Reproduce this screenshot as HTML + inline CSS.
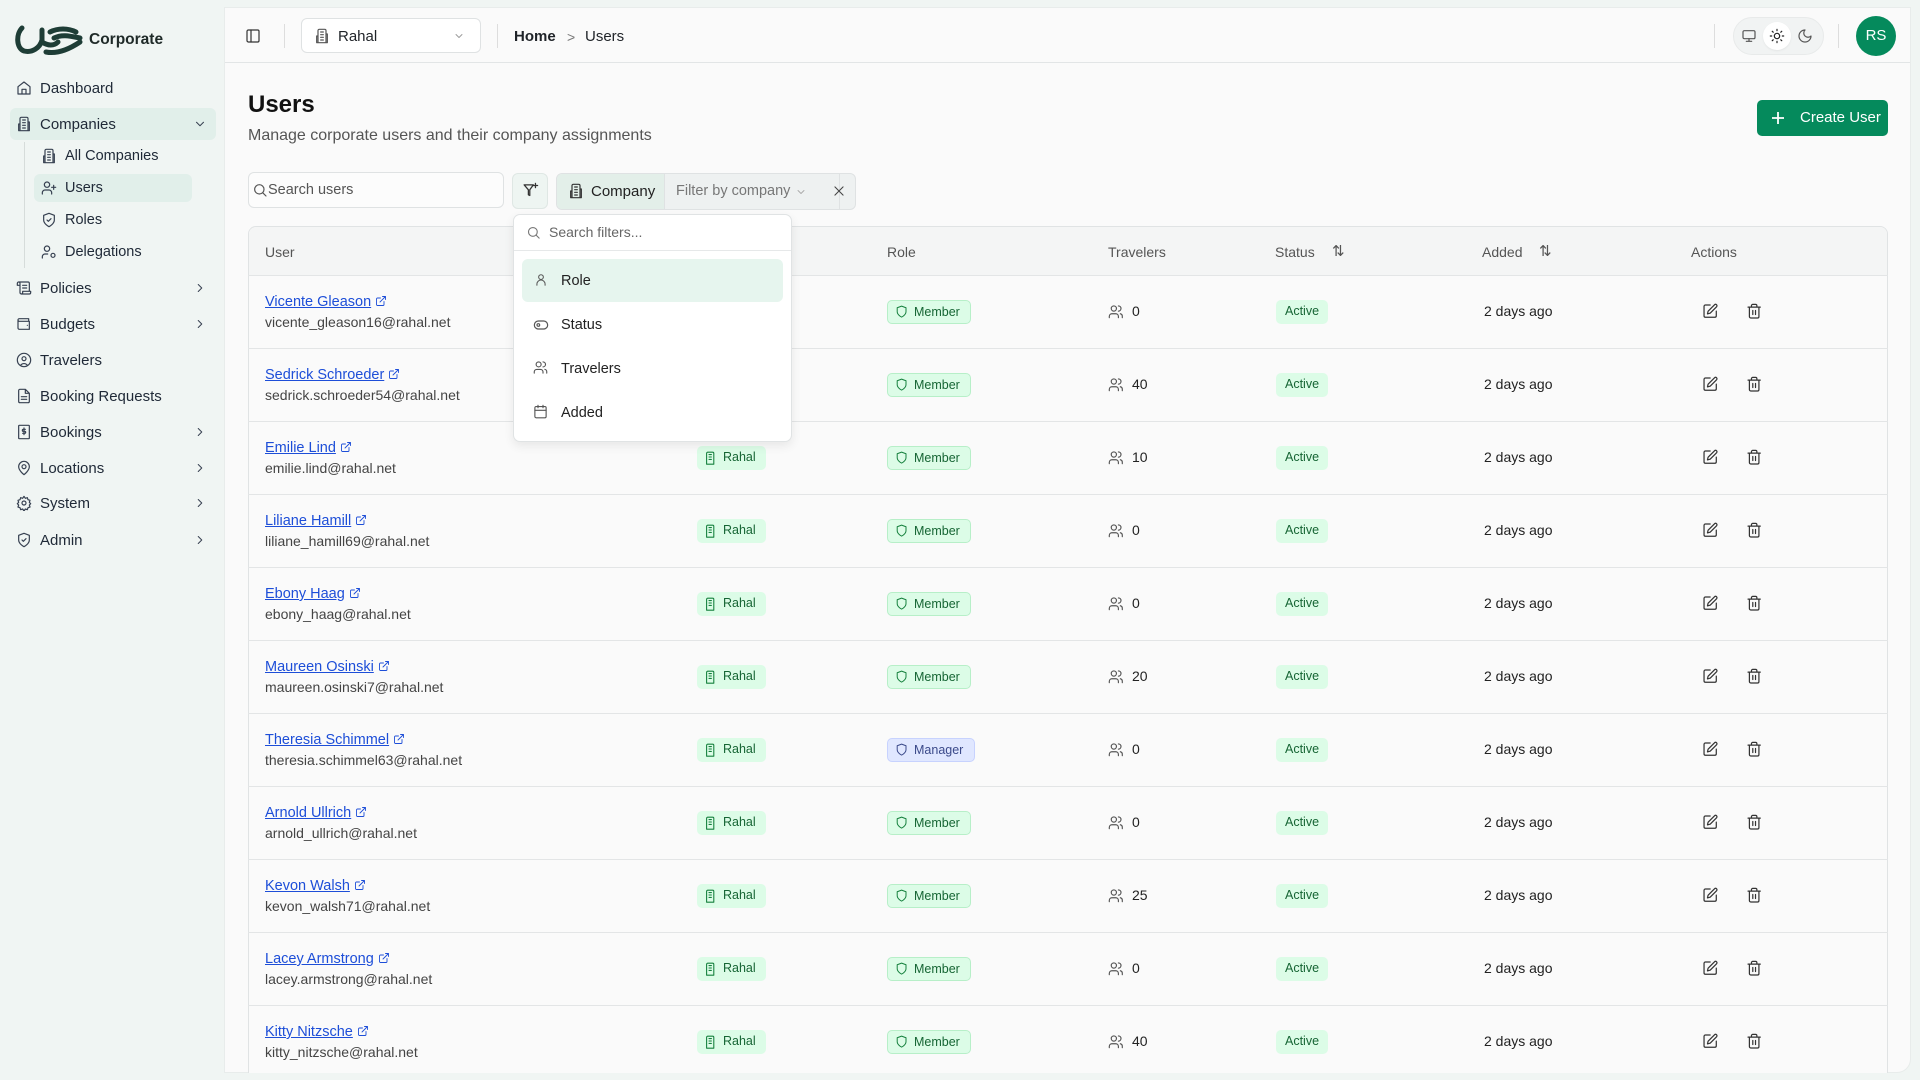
<!DOCTYPE html>
<html><head><meta charset="utf-8"><style>
*{box-sizing:border-box;margin:0;padding:0}
body{width:1920px;height:1080px;overflow:hidden;background:#f0f5f3;font-family:"Liberation Sans",Arial,sans-serif;color:#1f2328;position:relative}
.a{position:absolute}
svg{display:block}
.ic{fill:none;stroke:currentColor;stroke-width:1.8;stroke-linecap:round;stroke-linejoin:round}
.nav{position:absolute;left:40px;font-size:15px;color:#1f2937}
.navi{position:absolute;left:16px;width:16px;height:16px;color:#374151}
.chev{position:absolute;left:193px;color:#374151}
.main{position:absolute;left:224px;top:7px;width:1687px;height:1066px;background:#fafafa;border-radius:0 0 14px 0;border:1px solid #e8eceb}
.row{position:absolute;left:248px;width:1640px;height:73px;border-top:1px solid #e3e5e6}
.nm{position:absolute;left:17px;top:18px;font-size:14.5px;color:#1d4ed8}
.nm span{text-decoration:underline}
.nm svg{display:inline-block;vertical-align:-1px;margin-left:4px}
.em{position:absolute;left:17px;top:38px;font-size:14px;color:#444}
.bd{position:absolute;top:24px;height:24px;border-radius:5px;font-size:12.5px;line-height:22px;padding-left:26px;color:#166534;background:#dcfce7}
.rh{left:449px;width:69px}
.mb{left:639px;width:84px;border:1px solid #b7efc8}
.mg{left:639px;width:88px;border:1px solid #c7d2fe;background:#e0e7ff;color:#3b4a8a}
.ac{left:1028px;width:52px;padding-left:9px}
.tv{position:absolute;left:860px;top:27px;font-size:14px;color:#222}
.dt{position:absolute;left:1236px;top:27px;font-size:14px;color:#222}
</style></head><body>
<svg width="0" height="0" style="position:absolute"><defs>
<g id="bld" class="ic"><path d="M6 22V4a2 2 0 012-2h8a2 2 0 012 2v18z M10 6h4M10 10h4M10 14h4"/></g>
<g id="shd" class="ic"><path d="M12 22s8-4 8-10V5l-8-3-8 3v7c0 6 8 10 8 10z"/></g>
<g id="usr" class="ic"><circle cx="9" cy="7" r="4"/><path d="M2 21v-2a4 4 0 014-4h6a4 4 0 014 4v2 M16 3a4 4 0 010 8 M22 21v-2a4 4 0 00-3-4"/></g>
<g id="edt" class="ic"><path d="M12 3H5a2 2 0 00-2 2v14a2 2 0 002 2h14a2 2 0 002-2v-7 M18.4 2.6a2 2 0 013 3L12 15l-4 1 1-4z"/></g>
<g id="trs" class="ic"><path d="M3 6h18 M19 6v14a2 2 0 01-2 2H7a2 2 0 01-2-2V6 M8 6V4a2 2 0 012-2h4a2 2 0 012 2v2 M10 11v6M14 11v6"/></g>
<g id="ext" class="ic"><path d="M15 3h6v6 M10 14L21 3 M18 13v6a2 2 0 01-2 2H5a2 2 0 01-2-2V8a2 2 0 012-2h6"/></g>
</defs></svg>
<!-- logo -->
<svg class="a" style="left:14px;top:24px" width="70" height="32" viewBox="0 0 70 32"><path d="M8 4 C2 10 2 24 10 27 C18 29 26 24 28 16 L28 6 M28 18 C34 22 40 22 44 18 M36 8 C44 4 54 4 62 8 M40 14 C48 10 56 12 66 14 M32 28 C42 30 54 26 66 18" fill="none" stroke="#1e3d36" stroke-width="5" stroke-linecap="round"/></svg>
<div class="a" style="left:89px;top:31px;font-size:15.5px;font-weight:bold;color:#1f2a28">Corporate</div>

<!-- sidebar -->
<div class="a" style="left:10px;top:108px;width:206px;height:32px;background:#e1efea;border-radius:6px"></div>
<div class="a" style="left:34px;top:174px;width:158px;height:28px;background:#e1efea;border-radius:6px"></div>
<div class="a" style="left:24px;top:142px;width:1px;height:126px;background:#d6dcda"></div>

<svg class="navi ic" style="top:80px" viewBox="0 0 24 24"><path d="M3 10l9-7 9 7v11H3z M9 21v-7h6v7"/></svg><div class="nav" style="top:80px">Dashboard</div>
<svg class="navi ic" style="top:116px" viewBox="0 0 24 24"><path d="M6 22V4a2 2 0 012-2h8a2 2 0 012 2v18z M6 12H4v10h2 M18 9h2v13h-2 M10 6h4M10 10h4M10 14h4M10 18h4"/></svg><div class="nav" style="top:116px">Companies</div>
<svg class="chev ic" style="top:117px" width="14" height="14" viewBox="0 0 24 24"><path d="M6 9l6 6 6-6"/></svg>
<svg class="navi ic" style="left:41px;top:148px" viewBox="0 0 24 24"><path d="M6 22V4a2 2 0 012-2h8a2 2 0 012 2v18z M6 12H4v10h2 M18 9h2v13h-2 M10 6h4M10 10h4M10 14h4M10 18h4"/></svg><div class="nav" style="left:65px;top:148px;font-size:14.5px">All Companies</div>
<svg class="navi ic" style="left:41px;top:180px" viewBox="0 0 24 24"><circle cx="9" cy="7" r="4"/><path d="M2 21v-2a4 4 0 014-4h6a4 4 0 014 4v2 M19 8v6 M16 11h6"/></svg><div class="nav" style="left:65px;top:180px;font-size:14.5px">Users</div>
<svg class="navi ic" style="left:41px;top:212px" viewBox="0 0 24 24"><path d="M12 22s8-4 8-10V5l-8-3-8 3v7c0 6 8 10 8 10z M9 12l2 2 4-4"/></svg><div class="nav" style="left:65px;top:212px;font-size:14.5px">Roles</div>
<svg class="navi ic" style="left:41px;top:244px" viewBox="0 0 24 24"><circle cx="9" cy="7" r="4"/><path d="M2 21v-2a4 4 0 014-4h4"/><circle cx="18" cy="17" r="3"/></svg><div class="nav" style="left:65px;top:244px;font-size:14.5px">Delegations</div>

<svg class="navi ic" style="top:280px" viewBox="0 0 24 24"><path d="M8 21h12a2 2 0 002-2v-2H10v2a2 2 0 11-4 0V5a2 2 0 00-2-2h14a2 2 0 012 2v12 M4 3a2 2 0 00-2 2v3h4 M10 8h6M10 12h6"/></svg><div class="nav" style="top:280px">Policies</div>
<svg class="chev ic" style="top:281px" width="14" height="14" viewBox="0 0 24 24"><path d="M9 6l6 6-6 6"/></svg>
<svg class="navi ic" style="top:316px" viewBox="0 0 24 24"><path d="M19 7V4H5a2 2 0 000 4h15v12H5a2 2 0 01-2-2V6 M17 14h.01"/></svg><div class="nav" style="top:316px">Budgets</div>
<svg class="chev ic" style="top:317px" width="14" height="14" viewBox="0 0 24 24"><path d="M9 6l6 6-6 6"/></svg>
<svg class="navi ic" style="top:352px" viewBox="0 0 24 24"><circle cx="12" cy="12" r="10"/><circle cx="12" cy="10" r="3"/><path d="M7 20a6 6 0 0110 0"/></svg><div class="nav" style="top:352px">Travelers</div>
<svg class="navi ic" style="top:388px" viewBox="0 0 24 24"><path d="M14 2H6a2 2 0 00-2 2v16a2 2 0 002 2h12a2 2 0 002-2V8z M14 2v6h6 M8 13h8M8 17h8"/></svg><div class="nav" style="top:388px">Booking Requests</div>
<svg class="navi ic" style="top:424px" viewBox="0 0 24 24"><rect x="4" y="2" width="16" height="20" rx="1"/><path d="M14 8h-3a1.5 1.5 0 000 3h2a1.5 1.5 0 010 3h-3 M12 6v10"/></svg><div class="nav" style="top:424px">Bookings</div>
<svg class="chev ic" style="top:425px" width="14" height="14" viewBox="0 0 24 24"><path d="M9 6l6 6-6 6"/></svg>
<svg class="navi ic" style="top:460px" viewBox="0 0 24 24"><path d="M20 10c0 6-8 12-8 12s-8-6-8-12a8 8 0 0116 0z"/><circle cx="12" cy="10" r="3"/></svg><div class="nav" style="top:460px">Locations</div>
<svg class="chev ic" style="top:461px" width="14" height="14" viewBox="0 0 24 24"><path d="M9 6l6 6-6 6"/></svg>
<svg class="navi ic" style="top:495px" viewBox="0 0 24 24"><circle cx="12" cy="12" r="3"/><path d="M12 2l2 3 3-1 1 3 3 1-1 3 2 2-2 2 1 3-3 1-1 3-3-1-2 3-2-3-3 1-1-3-3-1 1-3-2-2 2-2-1-3 3-1 1-3 3 1z"/></svg><div class="nav" style="top:495px">System</div>
<svg class="chev ic" style="top:496px" width="14" height="14" viewBox="0 0 24 24"><path d="M9 6l6 6-6 6"/></svg>
<svg class="navi ic" style="top:532px" viewBox="0 0 24 24"><path d="M12 22s8-4 8-10V5l-8-3-8 3v7c0 6 8 10 8 10z M9 12l2 2 4-4"/></svg><div class="nav" style="top:532px">Admin</div>
<svg class="chev ic" style="top:533px" width="14" height="14" viewBox="0 0 24 24"><path d="M9 6l6 6-6 6"/></svg>

<div class="main"></div>
<!-- header -->
<div class="a" style="left:225px;top:62px;width:1685px;height:1px;background:#e2e5e6"></div>
<svg class="a ic" style="left:245px;top:28px;color:#333" width="16" height="16" viewBox="0 0 24 24"><rect x="3" y="3" width="18" height="18" rx="2"/><path d="M9 3v18"/></svg>
<div class="a" style="left:284px;top:24px;width:1px;height:24px;background:#ddd"></div>
<div class="a" style="left:301px;top:18px;width:180px;height:35px;border:1px solid #dfe2e3;border-radius:6px;background:#fff"></div>
<svg class="a ic" style="left:314px;top:28px;color:#555" width="16" height="16" viewBox="0 0 24 24"><path d="M6 22V4a2 2 0 012-2h8a2 2 0 012 2v18z M6 12H4v10h2 M18 9h2v13h-2 M10 6h4M10 10h4M10 14h4M10 18h4"/></svg>
<div class="a" style="left:338px;top:28px;font-size:15px">Rahal</div>
<svg class="a ic" style="left:453px;top:30px;color:#999" width="12" height="12" viewBox="0 0 24 24"><path d="M6 9l6 6 6-6"/></svg>
<div class="a" style="left:497px;top:24px;width:1px;height:24px;background:#ddd"></div>
<div class="a" style="left:514px;top:28px;font-size:15px;font-weight:bold">Home</div>
<div class="a" style="left:567px;top:29px;font-size:14px;color:#777">&gt;</div>
<div class="a" style="left:585px;top:28px;font-size:15px">Users</div>
<div class="a" style="left:1714px;top:24px;width:1px;height:24px;background:#ddd"></div>
<div class="a" style="left:1733px;top:17px;width:91px;height:38px;border-radius:19px;background:#f1f3f3;border:1px solid #e8eaea"></div>
<div class="a" style="left:1763px;top:22px;width:28px;height:28px;border-radius:50%;background:#fff;box-shadow:0 1px 2px rgba(0,0,0,.06)"></div>
<svg class="a ic" style="left:1741px;top:28px;color:#555" width="16" height="16" viewBox="0 0 24 24"><rect x="3" y="4" width="18" height="12" rx="2"/><path d="M12 16v4M8 20h8"/></svg>
<svg class="a ic" style="left:1769px;top:28px;color:#222" width="16" height="16" viewBox="0 0 24 24"><circle cx="12" cy="12" r="4"/><path d="M12 2v2M12 20v2M4.9 4.9l1.4 1.4M17.7 17.7l1.4 1.4M2 12h2M20 12h2M4.9 19.1l1.4-1.4M17.7 6.3l1.4-1.4"/></svg>
<svg class="a ic" style="left:1797px;top:28px;color:#555" width="16" height="16" viewBox="0 0 24 24"><path d="M12 3a6 6 0 009 9 9 9 0 11-9-9z"/></svg>
<div class="a" style="left:1838px;top:24px;width:1px;height:24px;background:#ddd"></div>
<div class="a" style="left:1856px;top:16px;width:40px;height:40px;border-radius:50%;background:#058a5c;color:#fff;font-size:15px;line-height:40px;text-align:center">RS</div>

<!-- title -->
<div class="a" style="left:248px;top:91px;font-size:24px;font-weight:bold;color:#111">Users</div>
<div class="a" style="left:248px;top:127px;font-size:16px;color:#555">Manage corporate users and their company assignments</div>
<div class="a" style="left:1757px;top:100px;width:131px;height:36px;background:#058a5c;border-radius:5px;color:#fff;font-size:15px;line-height:36px;padding-left:43px">Create User</div>
<svg class="a" style="left:1771px;top:111px" width="14" height="14" viewBox="0 0 14 14"><path d="M7 1v12M1 7h12" stroke="#fff" stroke-width="1.8"/></svg>

<!-- filters -->
<div class="a" style="left:248px;top:172px;width:256px;height:36px;border:1px solid #dfe2e3;border-radius:6px;background:#fcfcfc"></div>
<svg class="a ic" style="left:252px;top:182px;color:#555" width="16" height="16" viewBox="0 0 24 24"><circle cx="11" cy="11" r="7"/><path d="M21 21l-5-5"/></svg>
<div class="a" style="left:268px;top:182px;font-size:14.5px;color:#555">Search users</div>
<div class="a" style="left:512px;top:173px;width:36px;height:36px;border:1px solid #dfe7e4;border-radius:6px;background:#eef5f2"></div>
<svg class="a ic" style="left:522px;top:182px;color:#333" width="17" height="17" viewBox="0 0 24 24"><path d="M3 4h13l-5 7v8l-2-1v-7z M19 2v6M16 5h6"/></svg>
<div class="a" style="left:556px;top:173px;width:300px;height:37px;border:1px solid #dfe2e3;border-radius:6px;background:#eef1f1;overflow:hidden"><div style="width:108px;height:100%;background:#e3efe9;border-right:1px solid #dfe2e3"></div><div style="position:absolute;left:282px;top:0;width:1px;height:100%;background:#dfe2e3"></div></div>
<svg class="a ic" style="left:568px;top:183px;color:#333" width="16" height="16" viewBox="0 0 24 24"><path d="M6 22V4a2 2 0 012-2h8a2 2 0 012 2v18z M6 12H4v10h2 M18 9h2v13h-2 M10 6h4M10 10h4M10 14h4M10 18h4"/></svg>
<div class="a" style="left:591px;top:183px;font-size:15px;color:#222">Company</div>
<div class="a" style="left:676px;top:183px;font-size:14.5px;color:#777">Filter by company</div>
<svg class="a ic" style="left:795px;top:186px;color:#aaa" width="12" height="12" viewBox="0 0 24 24"><path d="M6 9l6 6 6-6"/></svg>
<svg class="a ic" style="left:832px;top:184px;color:#444" width="14" height="14" viewBox="0 0 24 24"><path d="M5 5l14 14M19 5L5 19"/></svg>

<!-- table -->
<div class="a" style="left:248px;top:226px;width:1640px;height:847px;border:1px solid #e0e3e4;border-bottom:none;border-radius:8px 8px 0 0;background:#fafafa;overflow:hidden">
<div style="position:absolute;left:0;top:0;width:1640px;height:48px;background:#f4f5f5"></div>
</div>
<div class="a" style="left:265px;top:244px;font-size:14px;color:#555">User</div>
<div class="a" style="left:887px;top:244px;font-size:14px;color:#555">Role</div>
<div class="a" style="left:1108px;top:244px;font-size:14px;color:#555">Travelers</div>
<div class="a" style="left:1275px;top:244px;font-size:14px;color:#555">Status</div>
<div class="a" style="left:1332px;top:242px;font-size:15px;color:#555">⇅</div>
<div class="a" style="left:1482px;top:244px;font-size:14px;color:#555">Added</div>
<div class="a" style="left:1539px;top:242px;font-size:15px;color:#555">⇅</div>
<div class="a" style="left:1691px;top:244px;font-size:14px;color:#555">Actions</div>

<div class="row" style="top:275px"><div class="nm"><span>Vicente Gleason</span><svg width="12" height="12" viewBox="0 0 24 24"><use href="#ext"/></svg></div><div class="em">vicente_gleason16@rahal.net</div><div class="bd rh">Rahal</div><div class="bd mb">Member</div><div class="tv" style="left:884px">0</div><div class="bd ac">Active</div><div class="dt">2 days ago</div></div>
<div class="row" style="top:348px"><div class="nm"><span>Sedrick Schroeder</span><svg width="12" height="12" viewBox="0 0 24 24"><use href="#ext"/></svg></div><div class="em">sedrick.schroeder54@rahal.net</div><div class="bd rh">Rahal</div><div class="bd mb">Member</div><div class="tv" style="left:884px">40</div><div class="bd ac">Active</div><div class="dt">2 days ago</div></div>
<div class="row" style="top:421px"><div class="nm"><span>Emilie Lind</span><svg width="12" height="12" viewBox="0 0 24 24"><use href="#ext"/></svg></div><div class="em">emilie.lind@rahal.net</div><div class="bd rh">Rahal</div><div class="bd mb">Member</div><div class="tv" style="left:884px">10</div><div class="bd ac">Active</div><div class="dt">2 days ago</div></div>
<div class="row" style="top:494px"><div class="nm"><span>Liliane Hamill</span><svg width="12" height="12" viewBox="0 0 24 24"><use href="#ext"/></svg></div><div class="em">liliane_hamill69@rahal.net</div><div class="bd rh">Rahal</div><div class="bd mb">Member</div><div class="tv" style="left:884px">0</div><div class="bd ac">Active</div><div class="dt">2 days ago</div></div>
<div class="row" style="top:567px"><div class="nm"><span>Ebony Haag</span><svg width="12" height="12" viewBox="0 0 24 24"><use href="#ext"/></svg></div><div class="em">ebony_haag@rahal.net</div><div class="bd rh">Rahal</div><div class="bd mb">Member</div><div class="tv" style="left:884px">0</div><div class="bd ac">Active</div><div class="dt">2 days ago</div></div>
<div class="row" style="top:640px"><div class="nm"><span>Maureen Osinski</span><svg width="12" height="12" viewBox="0 0 24 24"><use href="#ext"/></svg></div><div class="em">maureen.osinski7@rahal.net</div><div class="bd rh">Rahal</div><div class="bd mb">Member</div><div class="tv" style="left:884px">20</div><div class="bd ac">Active</div><div class="dt">2 days ago</div></div>
<div class="row" style="top:713px"><div class="nm"><span>Theresia Schimmel</span><svg width="12" height="12" viewBox="0 0 24 24"><use href="#ext"/></svg></div><div class="em">theresia.schimmel63@rahal.net</div><div class="bd rh">Rahal</div><div class="bd mg">Manager</div><div class="tv" style="left:884px">0</div><div class="bd ac">Active</div><div class="dt">2 days ago</div></div>
<div class="row" style="top:786px"><div class="nm"><span>Arnold Ullrich</span><svg width="12" height="12" viewBox="0 0 24 24"><use href="#ext"/></svg></div><div class="em">arnold_ullrich@rahal.net</div><div class="bd rh">Rahal</div><div class="bd mb">Member</div><div class="tv" style="left:884px">0</div><div class="bd ac">Active</div><div class="dt">2 days ago</div></div>
<div class="row" style="top:859px"><div class="nm"><span>Kevon Walsh</span><svg width="12" height="12" viewBox="0 0 24 24"><use href="#ext"/></svg></div><div class="em">kevon_walsh71@rahal.net</div><div class="bd rh">Rahal</div><div class="bd mb">Member</div><div class="tv" style="left:884px">25</div><div class="bd ac">Active</div><div class="dt">2 days ago</div></div>
<div class="row" style="top:932px"><div class="nm"><span>Lacey Armstrong</span><svg width="12" height="12" viewBox="0 0 24 24"><use href="#ext"/></svg></div><div class="em">lacey.armstrong@rahal.net</div><div class="bd rh">Rahal</div><div class="bd mb">Member</div><div class="tv" style="left:884px">0</div><div class="bd ac">Active</div><div class="dt">2 days ago</div></div>
<div class="row" style="top:1005px;height:68px"><div class="nm"><span>Kitty Nitzsche</span><svg width="12" height="12" viewBox="0 0 24 24"><use href="#ext"/></svg></div><div class="em">kitty_nitzsche@rahal.net</div><div class="bd rh">Rahal</div><div class="bd mb">Member</div><div class="tv" style="left:884px">40</div><div class="bd ac">Active</div><div class="dt">2 days ago</div></div>

<svg class="a" style="left:0;top:0;pointer-events:none" width="1920" height="1080">
<g transform="translate(703,305) scale(.6)" color="#15803d"><use href="#bld"/></g><g transform="translate(895,305) scale(.55)" color="#15803d"><use href="#shd"/></g><g transform="translate(1108,304) scale(.65)" color="#555"><use href="#usr"/></g><g transform="translate(1702,303) scale(.68)" color="#333"><use href="#edt"/></g><g transform="translate(1746,303) scale(.68)" color="#333"><use href="#trs"/></g>
<g transform="translate(0,73)"><g transform="translate(703,305) scale(.6)" color="#15803d"><use href="#bld"/></g><g transform="translate(895,305) scale(.55)" color="#15803d"><use href="#shd"/></g><g transform="translate(1108,304) scale(.65)" color="#555"><use href="#usr"/></g><g transform="translate(1702,303) scale(.68)" color="#333"><use href="#edt"/></g><g transform="translate(1746,303) scale(.68)" color="#333"><use href="#trs"/></g></g>
<g transform="translate(0,146)"><g transform="translate(703,305) scale(.6)" color="#15803d"><use href="#bld"/></g><g transform="translate(895,305) scale(.55)" color="#15803d"><use href="#shd"/></g><g transform="translate(1108,304) scale(.65)" color="#555"><use href="#usr"/></g><g transform="translate(1702,303) scale(.68)" color="#333"><use href="#edt"/></g><g transform="translate(1746,303) scale(.68)" color="#333"><use href="#trs"/></g></g>
<g transform="translate(0,219)"><g transform="translate(703,305) scale(.6)" color="#15803d"><use href="#bld"/></g><g transform="translate(895,305) scale(.55)" color="#15803d"><use href="#shd"/></g><g transform="translate(1108,304) scale(.65)" color="#555"><use href="#usr"/></g><g transform="translate(1702,303) scale(.68)" color="#333"><use href="#edt"/></g><g transform="translate(1746,303) scale(.68)" color="#333"><use href="#trs"/></g></g>
<g transform="translate(0,292)"><g transform="translate(703,305) scale(.6)" color="#15803d"><use href="#bld"/></g><g transform="translate(895,305) scale(.55)" color="#15803d"><use href="#shd"/></g><g transform="translate(1108,304) scale(.65)" color="#555"><use href="#usr"/></g><g transform="translate(1702,303) scale(.68)" color="#333"><use href="#edt"/></g><g transform="translate(1746,303) scale(.68)" color="#333"><use href="#trs"/></g></g>
<g transform="translate(0,365)"><g transform="translate(703,305) scale(.6)" color="#15803d"><use href="#bld"/></g><g transform="translate(895,305) scale(.55)" color="#15803d"><use href="#shd"/></g><g transform="translate(1108,304) scale(.65)" color="#555"><use href="#usr"/></g><g transform="translate(1702,303) scale(.68)" color="#333"><use href="#edt"/></g><g transform="translate(1746,303) scale(.68)" color="#333"><use href="#trs"/></g></g>
<g transform="translate(0,438)"><g transform="translate(703,305) scale(.6)" color="#15803d"><use href="#bld"/></g><g transform="translate(895,305) scale(.55)" color="#3b4a8a"><use href="#shd"/></g><g transform="translate(1108,304) scale(.65)" color="#555"><use href="#usr"/></g><g transform="translate(1702,303) scale(.68)" color="#333"><use href="#edt"/></g><g transform="translate(1746,303) scale(.68)" color="#333"><use href="#trs"/></g></g>
<g transform="translate(0,511)"><g transform="translate(703,305) scale(.6)" color="#15803d"><use href="#bld"/></g><g transform="translate(895,305) scale(.55)" color="#15803d"><use href="#shd"/></g><g transform="translate(1108,304) scale(.65)" color="#555"><use href="#usr"/></g><g transform="translate(1702,303) scale(.68)" color="#333"><use href="#edt"/></g><g transform="translate(1746,303) scale(.68)" color="#333"><use href="#trs"/></g></g>
<g transform="translate(0,584)"><g transform="translate(703,305) scale(.6)" color="#15803d"><use href="#bld"/></g><g transform="translate(895,305) scale(.55)" color="#15803d"><use href="#shd"/></g><g transform="translate(1108,304) scale(.65)" color="#555"><use href="#usr"/></g><g transform="translate(1702,303) scale(.68)" color="#333"><use href="#edt"/></g><g transform="translate(1746,303) scale(.68)" color="#333"><use href="#trs"/></g></g>
<g transform="translate(0,657)"><g transform="translate(703,305) scale(.6)" color="#15803d"><use href="#bld"/></g><g transform="translate(895,305) scale(.55)" color="#15803d"><use href="#shd"/></g><g transform="translate(1108,304) scale(.65)" color="#555"><use href="#usr"/></g><g transform="translate(1702,303) scale(.68)" color="#333"><use href="#edt"/></g><g transform="translate(1746,303) scale(.68)" color="#333"><use href="#trs"/></g></g>
<g transform="translate(0,730)"><g transform="translate(703,305) scale(.6)" color="#15803d"><use href="#bld"/></g><g transform="translate(895,305) scale(.55)" color="#15803d"><use href="#shd"/></g><g transform="translate(1108,304) scale(.65)" color="#555"><use href="#usr"/></g><g transform="translate(1702,303) scale(.68)" color="#333"><use href="#edt"/></g><g transform="translate(1746,303) scale(.68)" color="#333"><use href="#trs"/></g></g>
</svg>
<div class="a" style="left:224px;top:1073px;width:1696px;height:7px;background:#f0f5f3"></div>

<!-- dropdown -->
<div class="a" style="left:513px;top:214px;width:279px;height:228px;background:#fff;border:1px solid #e0e3e4;border-radius:7px;box-shadow:0 4px 10px rgba(0,0,0,.08)"></div>
<div class="a" style="left:514px;top:250px;width:277px;height:1px;background:#e6e8e9"></div>
<svg class="a ic" style="left:526px;top:225px;color:#777" width="15" height="15" viewBox="0 0 24 24"><circle cx="11" cy="11" r="7"/><path d="M21 21l-5-5"/></svg>
<div class="a" style="left:549px;top:224px;font-size:14px;color:#666">Search filters...</div>
<div class="a" style="left:522px;top:259px;width:261px;height:43px;background:#e6f5ee;border-radius:6px"></div>
<svg class="a ic" style="left:534px;top:273px;color:#555" width="14" height="14" viewBox="0 0 24 24"><circle cx="12" cy="7" r="4"/><path d="M5 21v-2a5 5 0 0114 0v2"/></svg>
<div class="a" style="left:561px;top:273px;font-size:14.5px;color:#222">Role</div>
<svg class="a ic" style="left:533px;top:317px;color:#555" width="16" height="16" viewBox="0 0 24 24"><rect x="2" y="6" width="20" height="12" rx="6"/><circle cx="8" cy="12" r="2"/></svg>
<div class="a" style="left:561px;top:317px;font-size:14.5px;color:#222">Status</div>
<svg class="a ic" style="left:533px;top:360px;color:#555" width="15" height="15" viewBox="0 0 24 24"><circle cx="9" cy="7" r="4"/><path d="M2 21v-2a4 4 0 014-4h6a4 4 0 014 4v2 M16 3a4 4 0 010 8 M22 21v-2a4 4 0 00-3-4"/></svg>
<div class="a" style="left:561px;top:361px;font-size:14.5px;color:#222">Travelers</div>
<svg class="a ic" style="left:533px;top:404px;color:#555" width="15" height="15" viewBox="0 0 24 24"><rect x="3" y="4" width="18" height="18" rx="2"/><path d="M16 2v4M8 2v4M3 10h18"/></svg>
<div class="a" style="left:561px;top:405px;font-size:14.5px;color:#222">Added</div>
</body></html>
